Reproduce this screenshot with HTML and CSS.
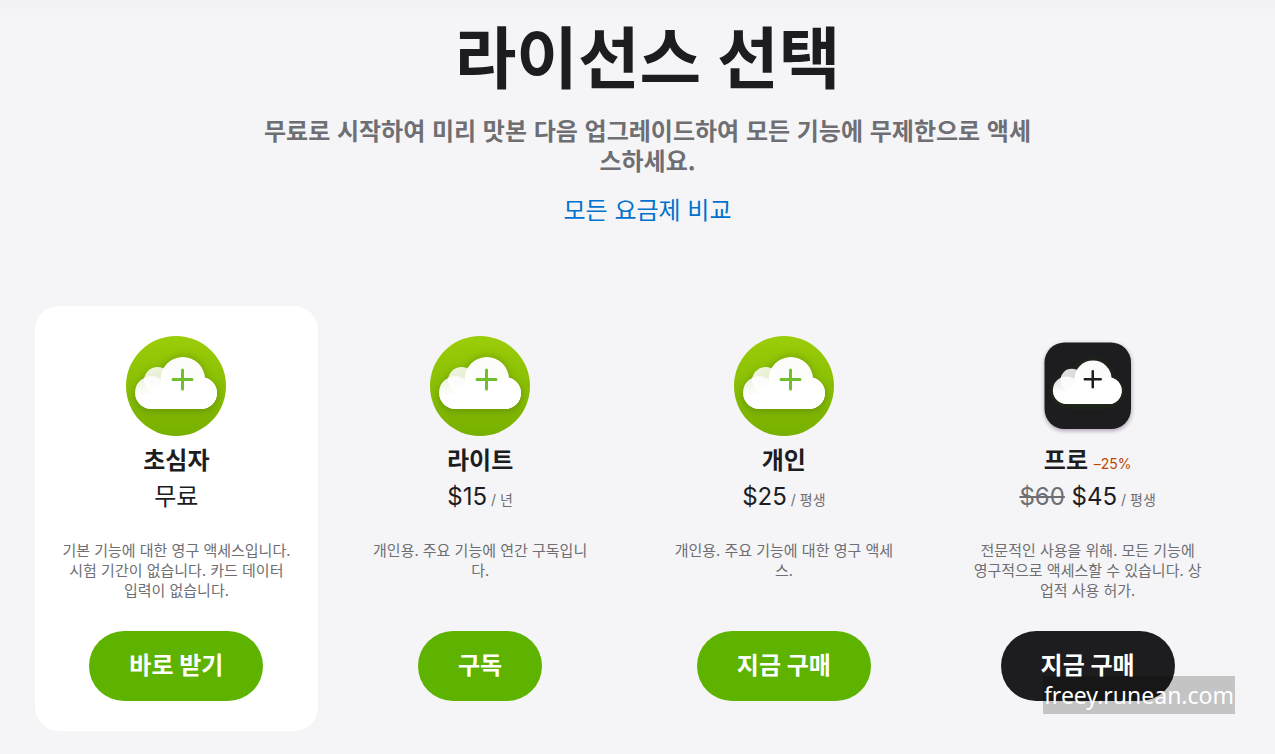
FILE: index.html
```html
<!DOCTYPE html>
<html lang="ko">
<head>
<meta charset="utf-8">
<meta name="viewport" content="width=device-width, initial-scale=1">
<title>라이선스 선택</title>
<link rel="stylesheet" href="styles.css">
</head>
<body>
<svg class="defs" width="0" height="0" aria-hidden="true">
  <defs>
    <linearGradient id="green" x1="0" y1="0" x2="0" y2="1"><stop offset="0" stop-color="#9ccd08"/><stop offset="1" stop-color="#78b000"/></linearGradient>
    <linearGradient id="puff" x1="0" y1="0" x2="1" y2="1"><stop offset="0" stop-color="#fff" stop-opacity=".88"/><stop offset="1" stop-color="#fff" stop-opacity=".78"/></linearGradient>
    <linearGradient id="lobe" gradientUnits="userSpaceOnUse" x1="0" y1="40" x2="0" y2="60"><stop offset="0" stop-color="#fff" stop-opacity=".85"/><stop offset="1" stop-color="#fff"/></linearGradient>
    <filter id="soft" x="-30%" y="-30%" width="160%" height="170%"><feGaussianBlur stdDeviation="4"/></filter>
    <filter id="edge" x="-20%" y="-20%" width="140%" height="150%"><feGaussianBlur stdDeviation="2"/></filter>
    <g id="cloud">
      <path d="M25 75a16.400 16.400 0 0 1-7-31a13.500 13.500 0 0 1 18-9a22.200 22.200 0 0 1 43 8.500a16 16 0 0 1-4 31.500z" fill="#274d00" opacity=".34" filter="url(#soft)"/>
      <circle cx="31.500" cy="44.500" r="13.500" fill="url(#puff)"/>
      <circle cx="25.400" cy="56.600" r="16.400" fill="url(#lobe)"/>
      <path d="M25.400 73V56L40 44L75 41.200A15.900 15.900 0 0 1 75 73z" fill="#fff" fill-opacity=".85"/>
      <circle cx="75" cy="57" r="16" fill="#fff"/>
      <circle cx="56.800" cy="43.200" r="22.200" fill="#fff" fill-opacity=".98"/>
      <path d="M9.600 60Q50 54 90.500 60A16 16 0 0 1 75 73H25.400A16.400 16.400 0 0 1 9.600 60z" fill="#fff"/>
    </g>
    <path id="plus" d="M56.500 34v19M47 43.500h19" fill="none" stroke-width="3" stroke-linecap="round"/>
  </defs>
</svg>
<main class="page">
  <header class="intro">
    <h1 class="intro-title">라이선스 선택</h1>
    <p class="intro-text">무료로 시작하여 미리 맛본 다음 업그레이드하여 모든 기능에 무제한으로 액세스하세요.</p>
    <a class="intro-link" href="#plans">모든 요금제 비교</a>
  </header>
  <section class="plans" id="plans">
    <article class="plan plan-active">
      <svg class="plan-icon" viewBox="0 0 100 100" aria-hidden="true"><circle cx="50" cy="50" r="50" fill="url(#green)"/><use href="#cloud"/><use href="#plus" stroke="#70bf2b"/></svg>
      <h2 class="plan-name">초심자</h2>
      <p class="plan-price">무료</p>
      <p class="plan-text">기본 기능에 대한 영구 액세스입니다. 시험 기간이 없습니다. 카드 데이터 입력이 없습니다.</p>
      <button class="buy" type="button">바로 받기</button>
    </article>
    <article class="plan">
      <svg class="plan-icon" viewBox="0 0 100 100" aria-hidden="true"><circle cx="50" cy="50" r="50" fill="url(#green)"/><use href="#cloud"/><use href="#plus" stroke="#70bf2b"/></svg>
      <h2 class="plan-name">라이트</h2>
      <p class="plan-price">$15<small class="term"> / 년</small></p>
      <p class="plan-text">개인용. 주요 기능에 연간 구독입니다.</p>
      <button class="buy" type="button">구독</button>
    </article>
    <article class="plan">
      <svg class="plan-icon" viewBox="0 0 100 100" aria-hidden="true"><circle cx="50" cy="50" r="50" fill="url(#green)"/><use href="#cloud"/><use href="#plus" stroke="#70bf2b"/></svg>
      <h2 class="plan-name">개인</h2>
      <p class="plan-price">$25<small class="term"> / 평생</small></p>
      <p class="plan-text">개인용. 주요 기능에 대한 영구 액세스.</p>
      <button class="buy" type="button">지금 구매</button>
    </article>
    <article class="plan">
      <svg class="plan-icon" viewBox="0 0 100 100" aria-hidden="true"><rect x="6.500" y="8" width="87" height="87" rx="20" fill="#4b2a55" opacity=".4" filter="url(#edge)"/><rect x="6.500" y="6.500" width="86.500" height="86.500" rx="20" fill="#1d1d1f"/><g transform="translate(7.300 6.800) scale(.84)"><use href="#cloud"/><use href="#plus" stroke="#1d1d1f"/></g></svg>
      <h2 class="plan-name">프로 <small class="discount">–25%</small></h2>
      <p class="plan-price"><s class="old">$60</s> $45<small class="term"> / 평생</small></p>
      <p class="plan-text">전문적인 사용을 위해. 모든 기능에 영구적으로 액세스할 수 있습니다. 상업적 사용 허가.</p>
      <button class="buy buy-dark" type="button">지금 구매</button>
    </article>
  </section>
</main>
<div class="watermark">freey.runean.com</div>
</body>
</html>
```

FILE: styles.css
```css
* {
  box-sizing: border-box;
}

body {
  margin: 0;
  min-height: 100vh;
  position: relative;
  background: #f5f5f7 linear-gradient(#f2f2f4, #f5f5f7) no-repeat top / 100% 24px;
  color: #1d1d1f;
  font-family: Inter, "Noto Sans CJK KR", sans-serif;
  font-size: 24px;
  line-height: 30px;
}

h1, h2, p {
  margin: 0;
}

.defs {
  position: absolute;
}

.page {
  padding: 23px 0 22px 20px;
}

.intro {
  display: flex;
  flex-direction: column;
  align-items: center;
  text-align: center;
}

.intro-title {
  font-size: 67px;
  line-height: 72px;
  font-weight: 700;
}

.intro-text {
  max-width: 780px;
  margin-top: 20px;
  color: #6e6e73;
  font-family: "Noto Sans CJK KR", sans-serif;
  font-weight: 600;
}

.intro-link {
  margin-top: 21px;
  color: #0071cf;
  text-decoration: none;
}

.plans {
  display: grid;
  grid-template-columns: repeat(4, 1fr);
  gap: 21px;
  margin-top: 80px;
  padding: 0 46px 0 15px;
}

.plan {
  display: flex;
  flex-direction: column;
  align-items: center;
  padding: 30px 27px;
  border-radius: 24px;
  text-align: center;
}

.plan-active {
  background: #fff;
}

.plan-icon {
  width: 100px;
  height: 100px;
  overflow: visible;
}

.plan-name {
  margin-top: 10px;
  font-size: 24px;
  font-weight: 700;
}

.plan-price {
  margin-top: 6px;
}

.term, .discount {
  font-size: 14px;
  line-height: 1;
  font-weight: 400;
  color: #6e6e73;
}

.discount {
  color: #bf4800;
}

.old {
  color: #6e6e73;
}

.plan-text {
  margin: 28px 0 31px;
  color: #6e6e73;
  font-family: "Noto Sans CJK KR", sans-serif;
  font-size: 15px;
  line-height: 20px;
}

.buy {
  height: 70px;
  margin-top: auto;
  padding: 0 40px;
  border: 0;
  border-radius: 35px;
  background: #5eb300;
  color: #fff;
  font: inherit;
  font-weight: 700;
  cursor: pointer;
}

.buy-dark {
  background: #1d1d1f;
}

.watermark {
  position: absolute;
  right: 40px;
  bottom: 40px;
  padding: 0 1px;
  background: rgba(0, 0, 0, .2);
  color: #fff;
  font-family: "Noto Sans", sans-serif;
  font-size: 23px;
  line-height: 38px;
}
```
